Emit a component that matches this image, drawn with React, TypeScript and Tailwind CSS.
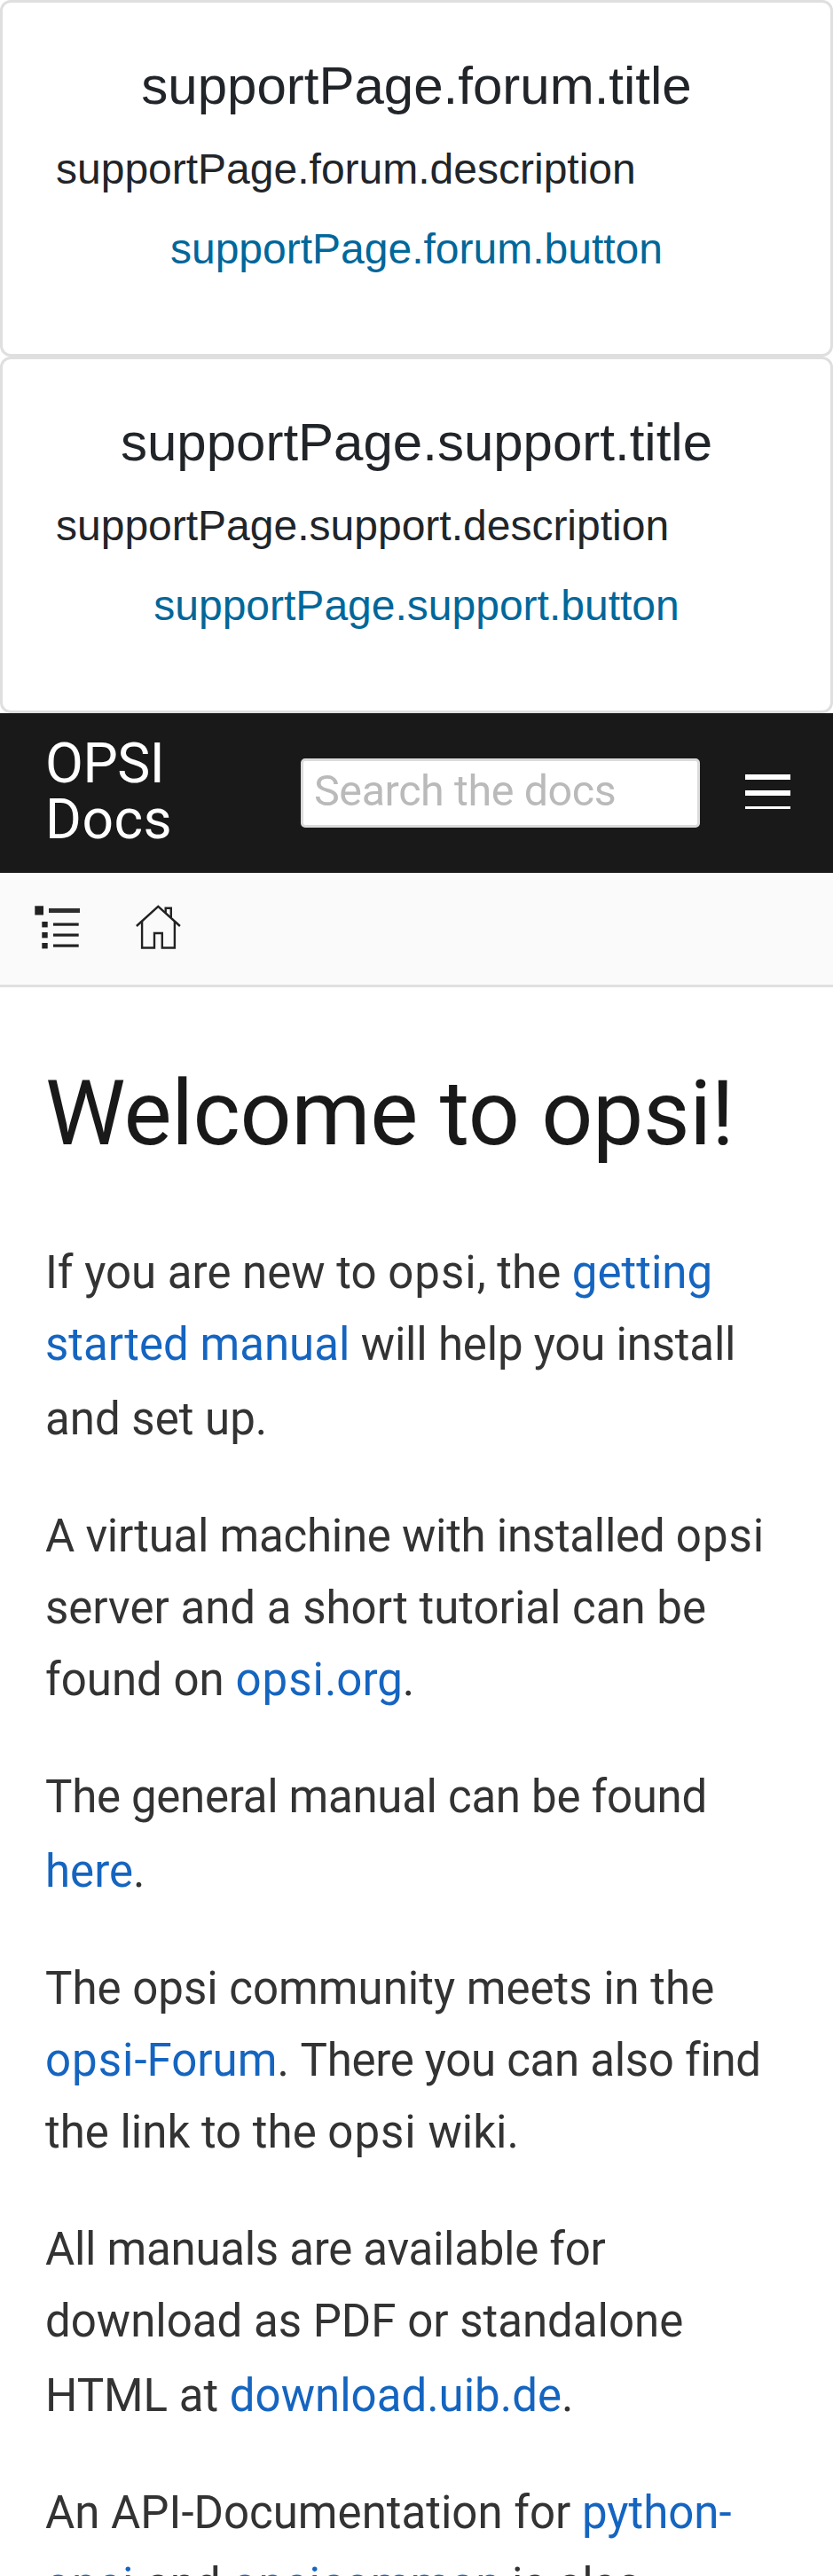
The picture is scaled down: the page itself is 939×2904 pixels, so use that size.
import type { ReactNode } from "react";

function SupportCard({ name }: { name: string }) {
  return (
    <section className="h-[402px] rounded-[12px] border-[3px] border-[#dfdfdf] px-[60px] pt-[58px] font-['Liberation_Sans',Arial,sans-serif] text-[48px] leading-[72px] text-[#212529]">
      <h5 className="text-center text-[60px] leading-[72px]">supportPage.{name}.title</h5>
      <p className="mt-[22px]">supportPage.{name}.description</p>
      <a href="#" className="mt-[18px] block text-center text-[#00679a]">
        supportPage.{name}.button
      </a>
    </section>
  );
}

function Navbar() {
  return (
    <header className="flex h-[180px] items-start bg-[#191919] text-white">
      <a href="#" className="mt-[25px] ml-[51px] w-[180px] text-[62.33px] leading-[63px]">
        <span className="tracking-[-0.5px]">OPSI</span> <span className="tracking-[0.5px]">Docs</span>
      </a>
      <input
        type="text"
        placeholder="Search the docs"
        className="mt-[51px] ml-[108px] h-[78px] w-[450px] rounded-[5px] border-[3px] border-[#dbdbdb] bg-white px-[12px] pb-[5px] text-[48.45px] leading-[67px] tracking-[-0.4px] text-[#333] placeholder:text-[#bababa]"
      />
      <button aria-label="Menu" className="mt-[69px] ml-[51px] flex w-[51px] flex-col gap-[12px]">
        <span className="h-[6px] bg-white" />
        <span className="h-[6px] bg-white" />
        <span className="h-[3px] bg-white" />
      </button>
    </header>
  );
}

function ListIcon() {
  return (
    <svg className="h-[51px] w-[51px]" viewBox="0 0 51 51" fill="#222">
      <rect x="0.3" y="1.3" width="9.7" height="10.2" />
      <rect x="16" y="4" width="35" height="5" fill="#2e2e2e" />
      {[19, 31, 43].map((y) => (
        <g key={y}>
          <rect x="8.3" y={y} width="6.4" height="6.4" />
          <rect x="21" y={y + 1.5} width="28.7" height="3.2" />
        </g>
      ))}
    </svg>
  );
}

function HomeIcon() {
  return (
    <svg className="h-[51px] w-[51px]" viewBox="0 0 51 51" fill="none" stroke="#222" strokeWidth="2.4">
      <path d="M0.9 24 25.3 1.9 49.9 24" />
      <path d="M7.1 18.5V48.5H21V32H29.8V48.5H43.9V18.5" />
      <path d="M33.7 9V3.8H39.8V14" />
    </svg>
  );
}

function Link({ children }: { children: ReactNode }) {
  return (
    <a href="#" className="text-[#1565c0]">
      {children}
    </a>
  );
}

function Opsi() {
  return <span className="tracking-[1px]">opsi</span>;
}

export default function App() {
  return (
    <div className="h-[2904px] w-[939px] overflow-hidden bg-white font-[Roboto,sans-serif]">
      <SupportCard name="forum" />
      <SupportCard name="support" />
      <Navbar />
      <div className="flex h-[129px] gap-[63px] border-b-[3px] border-[#e0e0e0] bg-[#fafafa] pt-[36px] pl-[39px]">
        <ListIcon />
        <HomeIcon />
      </div>
      <article className="px-[51px] text-[51px] leading-[81px] text-[#333]">
        <h1 className="pt-[76px] text-[102px] leading-[132px] tracking-[-0.43px] text-[#191919]">Welcome to opsi!</h1>
        <p className="mt-[73px]">
          If you are new to <Opsi />, the <Link>getting started manual</Link>
          <span className="tracking-[-0.2px]"> will help you install</span>
          <span className="mt-[3px] block">and set up.</span>
        </p>
        <p className="mt-[51px]">
          <span className="tracking-[-0.26px]">A virtual machine with installed </span>
          <Opsi /> server and a short tutorial can be found on{" "}
          <Link>
            <Opsi />
            .org
          </Link>
          .
        </p>
        <p className="mt-[50px] leading-[84px]">
          <span className="tracking-[-0.3px]">The general manual can be found </span>
          <Link>here</Link>.
        </p>
        <p className="mt-[49px]">
          The opsi community meets in the{" "}
          <Link>
            <Opsi />
            -Forum
          </Link>
          . <span className="tracking-[-0.3px]">There you can also find </span>
          the link to the <Opsi /> wiki.
        </p>
        <p className="mt-[51px]">
          <span className="tracking-[-0.28px]">All manuals are available for </span>
          download as PDF or standalone
          <span className="mt-[3px] block">
            HTML at <Link>download.uib.de</Link>.
          </span>
        </p>
        <p className="mt-[51px]">
          An API-Documentation for{" "}
          <Link>
            python-
            <Opsi />
          </Link>{" "}
          and{" "}
          <Link>
            <Opsi />
            common
          </Link>{" "}
          is also
        </p>
      </article>
    </div>
  );
}
